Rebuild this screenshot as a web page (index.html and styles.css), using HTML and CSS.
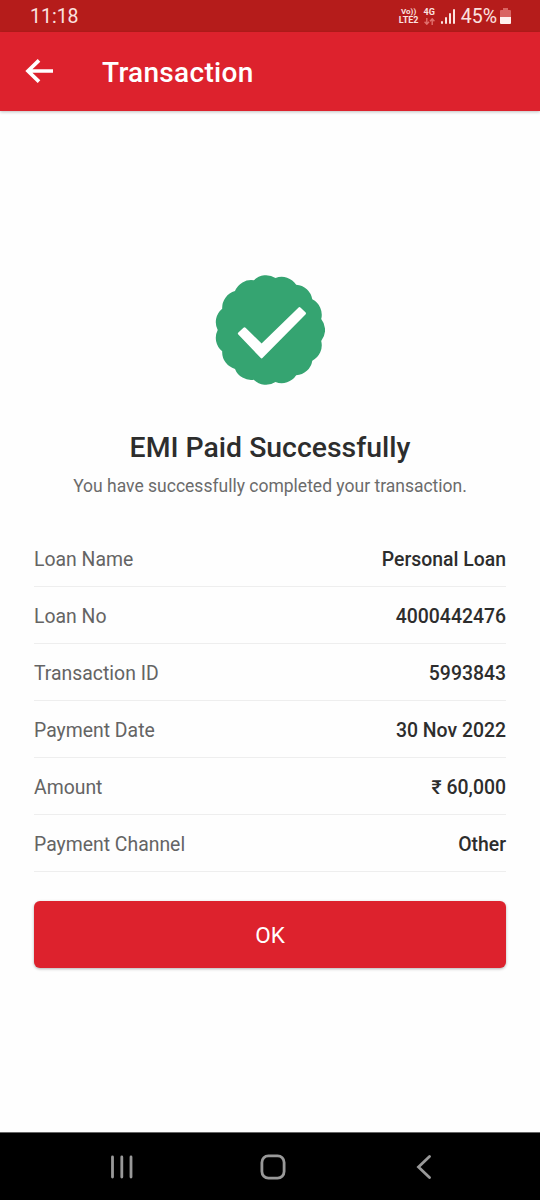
FILE: index.html
```html
<!DOCTYPE html>
<html lang="en">
<head>
    <meta charset="UTF-8">
    <meta name="viewport" content="width=device-width, initial-scale=1.0">
    <title>Transaction</title>
    <link rel="stylesheet" href="styles.css">
</head>
<body>
    <div class="status-bar">
        <span class="clock">11:18</span>
        <div class="status-icons">
            <div class="volte"><span class="vo">Vo))</span><span class="lte">LTE2</span></div>
            <div class="network">
                <span>4G</span>
                <svg width="11" height="7" viewBox="0 0 11 7" fill="none" stroke="#e0716e" stroke-width="1.4">
                    <path d="M2.8 0v6M.6 3.8l2.2 2.4L5 3.8M8.2 7V1M6 3.2L8.2.8l2.2 2.4"/>
                </svg>
            </div>
            <svg class="signal" width="14" height="15" viewBox="0 0 14 15" fill="#fbe3e0">
                <rect x="0" y="12" width="2" height="3" rx="1"/>
                <rect x="4" y="8" width="2" height="7" rx="1"/>
                <rect x="8" y="4" width="2" height="11" rx="1"/>
                <rect x="12" y="0" width="2" height="15" rx="1"/>
            </svg>
            <span class="percent">45%</span>
            <svg class="battery" width="11" height="16" viewBox="0 0 11 16">
                <path d="M3 0h5v2h2q1 0 1 1v6H0V3q0-1 1-1h2z" fill="#d96562"/>
                <path d="M0 9h11v6q0 1-1 1H1q-1 0-1-1z" fill="#fff1ee"/>
            </svg>
        </div>
    </div>

    <header class="header">
        <svg class="back" width="28" height="24" viewBox="0 0 28 24" fill="none" stroke="#fff" stroke-width="3.7">
            <path d="M28 12H3M14 1.3L3 12l11 10.7"/>
        </svg>
        <h1>Transaction</h1>
    </header>

    <main class="content">
        <svg class="badge" width="110" height="110" viewBox="0 0 110 110">
            <path fill="#35a471" d="M106.2 44.1A17.3 17.3 0 0 0 97.3 24.3A17.3 17.3 0 0 0 81.2 9.7A17.3 17.3 0 0 0 60.5 3A17.3 17.3 0 0 0 38.8 5.3A17.3 17.3 0 0 0 20 16.1A17.3 17.3 0 0 0 7.2 33.7A17.3 17.3 0 0 0 2.7 55A17.3 17.3 0 0 0 7.2 76.3A17.3 17.3 0 0 0 20 93.9A17.3 17.3 0 0 0 38.8 104.7A17.3 17.3 0 0 0 60.5 107A17.3 17.3 0 0 0 81.2 100.3A17.3 17.3 0 0 0 97.3 85.7A17.3 17.3 0 0 0 106.2 65.9A17.3 17.3 0 0 0 106.2 44.1z"/>
            <path fill="#fff" stroke="#fff" stroke-width="3" stroke-linejoin="round" d="M24.4 58.5L29.5 53.8L46.6 70.6L84.4 33.7L89.4 38.4L46.6 81.8z"/>
        </svg>
        <h2>EMI Paid Successfully</h2>
        <p class="message">You have successfully completed your transaction.</p>

        <dl class="details">
            <div class="row"><dt>Loan Name</dt><dd>Personal Loan</dd></div>
            <div class="row"><dt>Loan No</dt><dd>4000442476</dd></div>
            <div class="row"><dt>Transaction ID</dt><dd>5993843</dd></div>
            <div class="row"><dt>Payment Date</dt><dd>30 Nov 2022</dd></div>
            <div class="row"><dt>Amount</dt><dd>₹ 60,000</dd></div>
            <div class="row"><dt>Payment Channel</dt><dd>Other</dd></div>
        </dl>

        <button class="ok">OK</button>
    </main>

    <nav class="nav-bar">
        <svg width="24" height="24" viewBox="0 0 24 24" fill="none" stroke="#999" stroke-width="2.8" stroke-linecap="round">
            <path d="M2.5 2v20M11.8 2v20M21 2v20"/>
        </svg>
        <svg class="home" width="26" height="26" viewBox="0 0 26 26" fill="none" stroke="#999" stroke-width="2.8">
            <rect x="1.9" y="1.9" width="22.2" height="22.2" rx="6.5"/>
        </svg>
        <svg width="16" height="24" viewBox="0 0 16 24" fill="none" stroke="#999" stroke-width="2.8" stroke-linecap="round">
            <path d="M13.5 1.5L2.5 12l11 10.5"/>
        </svg>
    </nav>
</body>
</html>
```

FILE: styles.css
```css
* {
    box-sizing: border-box;
}
body {
    margin: 0;
    height: 1200px;
    display: flex;
    flex-direction: column;
    font-family: Roboto, "Noto Sans", sans-serif;
    background-color: #fefefe;
    color: #2d2d2d;
}
.status-bar {
    height: 32px;
    display: flex;
    justify-content: space-between;
    align-items: center;
    padding: 0 29px 0 30px;
    background-color: #b51c1b;
    color: #fbe3e0;
}
.clock {
    font-size: 19.5px;
    line-height: 32px;
    padding-top: 1px;
}
.status-icons {
    display: flex;
    align-items: center;
}
.volte {
    display: flex;
    flex-direction: column;
    align-items: center;
    font-weight: 700;
    line-height: 9px;
}
.vo {
    font-size: 8px;
}
.lte {
    font-size: 9px;
}
.network {
    display: flex;
    flex-direction: column;
    align-items: center;
    gap: 1px;
    margin-left: 5px;
    font-size: 9px;
    font-weight: 700;
    line-height: 9px;
}
.signal {
    margin: 0 6px;
}
.percent {
    font-size: 19.5px;
    line-height: 32px;
    padding-top: 1px;
}
.battery {
    margin-left: 3px;
}
.header {
    height: 79px;
    display: flex;
    align-items: center;
    padding-left: 25px;
    background-color: #dd222d;
    color: #fff;
    box-shadow: 0 1px 3px rgba(0, 0, 0, 0.25);
}
.back {
    margin-bottom: 1px;
}
.header h1 {
    margin: 2px 0 0 49px;
    font-size: 28px;
    font-weight: 500;
    letter-spacing: 0.3px;
}
.content {
    flex: 1;
    display: flex;
    flex-direction: column;
    align-items: center;
    padding: 164px 34px 0;
}
.content h2 {
    margin: 44px 0 0;
    font-size: 28.4px;
    font-weight: 500;
    line-height: 38px;
}
.message {
    margin: 7px 0 0;
    font-size: 17.5px;
    line-height: 24px;
    color: #6b6b6b;
}
.details {
    width: 100%;
    margin: 32px 0 29px;
}
.row {
    height: 57px;
    display: flex;
    justify-content: space-between;
    align-items: center;
    padding-top: 2px;
    border-bottom: 1px solid #eee;
    font-size: 19.4px;
}
.row dt {
    color: #646464;
}
.row dd {
    margin: 0;
    font-weight: 500;
}
.ok {
    width: 100%;
    height: 67px;
    border: none;
    border-radius: 6px;
    background-color: #dd222d;
    box-shadow: 0 1px 3px rgba(0, 0, 0, 0.3);
    color: #fff;
    font-family: inherit;
    font-size: 22.5px;
}
.nav-bar {
    height: 68px;
    display: flex;
    align-items: center;
    padding: 1px 108px 0 110px;
    justify-content: space-between;
    background-color: #000;
    border-top: 1px solid #666;
}
.home {
    margin-right: 5px;
}
```
